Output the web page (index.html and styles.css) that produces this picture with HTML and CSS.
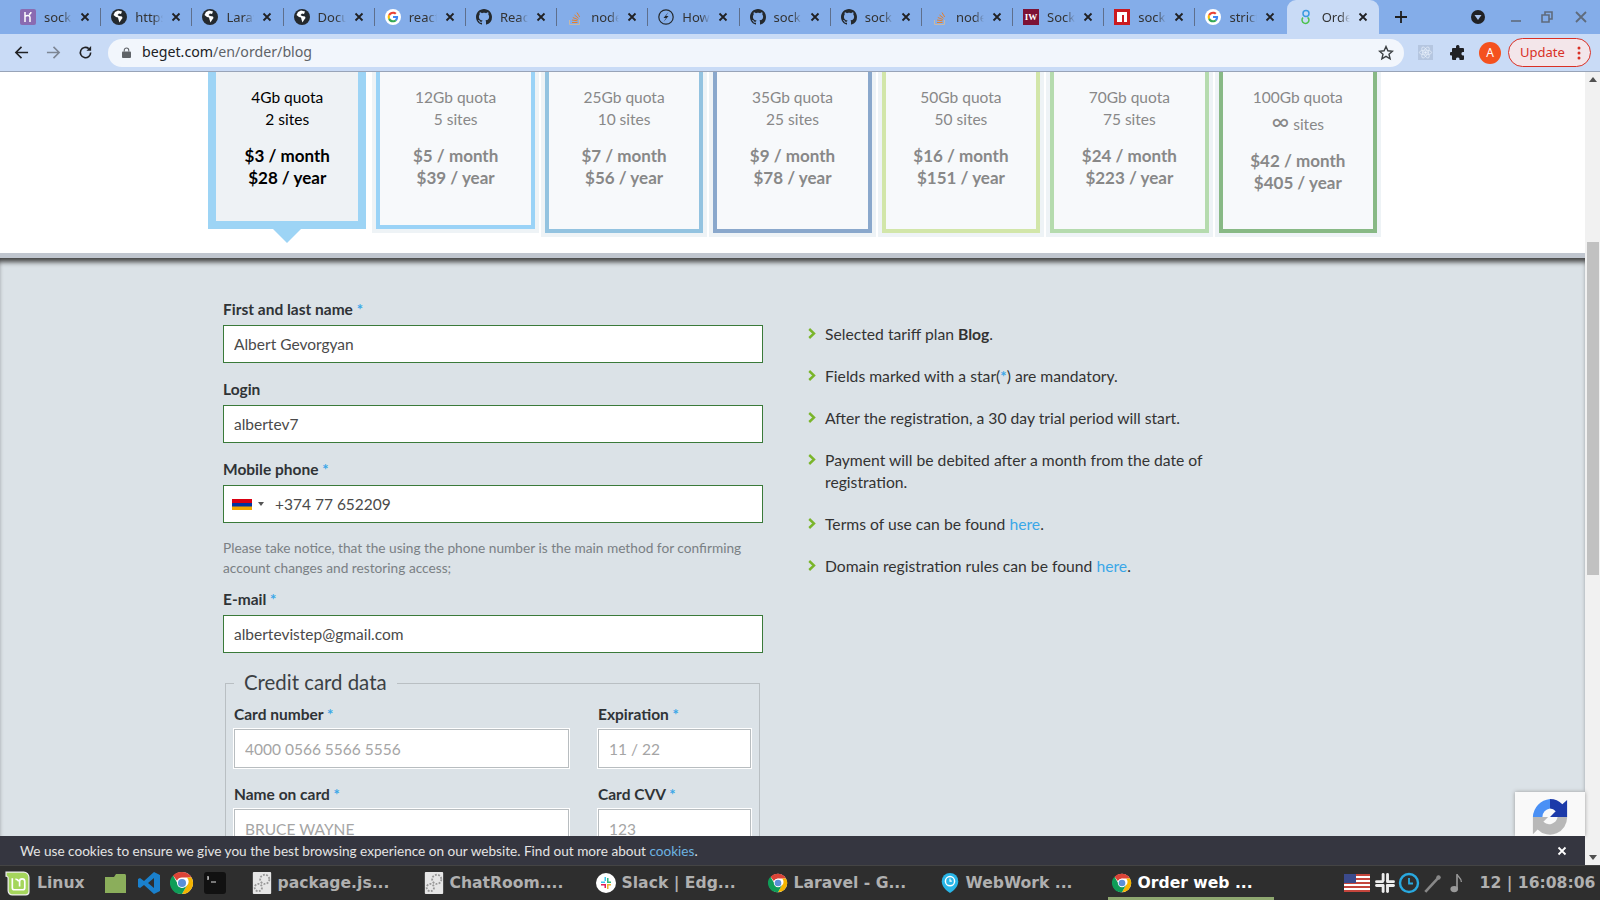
FILE: index.html
```html
<!DOCTYPE html>
<html lang="en">
<head>
  <meta charset="UTF-8">
  <title>Order web hosting</title>
  <link rel="stylesheet" href="styles.css">
</head>
<body>
  <svg class="defs" width="0" height="0">
    <symbol id="globe" viewBox="0 0 16 16"><circle cx="8" cy="8" r="8" fill="#24292e"/><path fill="#fff" d="M7 1.500 4 3 2.500 6l2.500 2 2 .5.500 2 1 3 1.500-2.500 1.500-2-.500-1.500L8 7 6.500 6 8 4.500l2 .5 1-2.500z"/></symbol>
    <symbol id="google" viewBox="0 0 48 48"><circle cx="24" cy="24" r="24" fill="#fff"/><g transform="translate(8 8) scale(.667)"><path fill="#EA4335" d="M24 9.500c3.540 0 6.710 1.220 9.210 3.600l6.850-6.850C35.900 2.380 30.470 0 24 0 14.620 0 6.510 5.380 2.560 13.220l7.980 6.190C12.430 13.720 17.740 9.500 24 9.500z"/><path fill="#4285F4" d="M46.980 24.550c0-1.570-.15-3.090-.38-4.550H24v9.020h12.940c-.58 2.960-2.260 5.480-4.780 7.180l7.730 6c4.510-4.180 7.090-10.360 7.090-17.650z"/><path fill="#FBBC05" d="M10.530 28.590c-.48-1.450-.76-2.990-.76-4.590s.27-3.140.76-4.590l-7.980-6.190C.92 16.460 0 20.120 0 24c0 3.880.92 7.540 2.560 10.780l7.970-6.190z"/><path fill="#34A853" d="M24 48c6.480 0 11.930-2.130 16.090-5.810l-7.730-6c-2.150 1.450-4.920 2.300-8.360 2.300-6.260 0-11.570-4.220-13.470-9.910l-7.980 6.190C6.510 42.620 14.620 48 24 48z"/></g></symbol>
    <symbol id="github" viewBox="0 0 16 16"><path fill="#24292e" d="M8 0C3.580 0 0 3.580 0 8c0 3.540 2.290 6.530 5.470 7.590.4.070.55-.17.55-.38 0-.19-.01-.82-.01-1.490-2.010.37-2.530-.49-2.690-.94-.09-.23-.48-.94-.82-1.130-.28-.15-.68-.52-.01-.53.63-.01 1.080.58 1.230.82.72 1.210 1.870.87 2.330.66.070-.52.28-.87.51-1.070-1.780-.2-3.640-.89-3.640-3.950 0-.87.31-1.590.82-2.150-.08-.2-.36-1.020.08-2.120 0 0 .67-.21 2.200.82.64-.18 1.320-.27 2-.27.68 0 1.360.09 2 .27 1.530-1.040 2.200-.82 2.200-.82.44 1.100.16 1.920.08 2.120.51.56.82 1.270.82 2.150 0 3.070-1.870 3.750-3.650 3.950.29.25.54.73.54 1.480 0 1.070-.01 1.930-.01 2.200 0 .21.15.46.55.38A8.013 8.013 0 0016 8c0-4.420-3.580-8-8-8z"/></symbol>
    <symbol id="stack" viewBox="0 0 16 16"><path d="M2.500 11v4.500h10V11" fill="none" stroke="#c7b9a8" stroke-width="1"/><path d="M5 13.500h5.500M5 11l5.500.8M5.800 8.500l5 2M7.500 6l4 3.200M10 3.500l2.700 4.500" fill="none" stroke="#e8802a" stroke-width="1"/></symbol>
    <symbol id="chrome" viewBox="0 0 24 24"><circle cx="12" cy="12" r="11" fill="#fff"/><path fill="#db4437" d="M12 1a11 11 0 0 1 9.530 5.500H12a5.500 5.500 0 0 0-5 3.200L3 4.500A11 11 0 0 1 12 1z"/><path fill="#f4b400" d="M21.530 6.500A11 11 0 0 1 12 23l4.700-8.200a5.500 5.500 0 0 0 .1-8.300z"/><path fill="#0f9d58" d="M3 4.500l4.700 8.200a5.500 5.500 0 0 0 9 2.100L12 23A11 11 0 0 1 3 4.500z"/><circle cx="12" cy="12" r="5" fill="#fff"/><circle cx="12" cy="12" r="4" fill="#5a8fd8"/></symbol>
    <symbol id="textfile" viewBox="0 0 20 24"><rect width="20" height="24" rx="1" fill="#e6e6e6"/><circle cx="13" cy="8" r="5" fill="none" stroke="#999" stroke-width="2" stroke-dasharray="2 1.500"/><circle cx="6" cy="17" r="4" fill="none" stroke="#999" stroke-width="2" stroke-dasharray="2 1.500"/></symbol>
    <symbol id="chevron" viewBox="0 0 8 11"><path d="M1.200 1 6 5.500 1.200 10" fill="none" stroke="#7ab52a" stroke-width="2.400"/></symbol>
    <symbol id="cross" viewBox="0 0 10 10"><path d="M1.500 1.500l7 7M8.500 1.500l-7 7" stroke="currentColor" stroke-width="1.800" fill="none"/></symbol>
  </svg>

  <div class="tabstrip">
    <div class="tab">
      <svg class="favicon" viewBox="0 0 16 16"><rect width="16" height="16" rx="2" fill="#8a6bb1"/><path d="M5 3v10M5 7.500c2-1.500 5-1.500 5 1V13M11 3c0 1.500-.7 2-2 2.500" fill="none" stroke="#fff" stroke-width="1.500"/></svg>
      <span class="tab-title">socke</span><svg class="tab-close"><use href="#cross"/></svg>
    </div>
    <div class="tab"><svg class="favicon"><use href="#globe"/></svg><span class="tab-title">https</span><svg class="tab-close"><use href="#cross"/></svg></div>
    <div class="tab"><svg class="favicon"><use href="#globe"/></svg><span class="tab-title">Larav</span><svg class="tab-close"><use href="#cross"/></svg></div>
    <div class="tab"><svg class="favicon"><use href="#globe"/></svg><span class="tab-title">Docu</span><svg class="tab-close"><use href="#cross"/></svg></div>
    <div class="tab"><svg class="favicon"><use href="#google"/></svg><span class="tab-title">react</span><svg class="tab-close"><use href="#cross"/></svg></div>
    <div class="tab"><svg class="favicon"><use href="#github"/></svg><span class="tab-title">Reac</span><svg class="tab-close"><use href="#cross"/></svg></div>
    <div class="tab"><svg class="favicon"><use href="#stack"/></svg><span class="tab-title">node</span><svg class="tab-close"><use href="#cross"/></svg></div>
    <div class="tab">
      <svg class="favicon" viewBox="0 0 16 16"><circle cx="8" cy="8" r="7.200" fill="none" stroke="#24292e" stroke-width="1.200"/><path d="M10.500 3 5.500 9H8l-2.500 4 5-6H8z" fill="#24292e"/></svg>
      <span class="tab-title">How</span><svg class="tab-close"><use href="#cross"/></svg>
    </div>
    <div class="tab"><svg class="favicon"><use href="#github"/></svg><span class="tab-title">sock</span><svg class="tab-close"><use href="#cross"/></svg></div>
    <div class="tab"><svg class="favicon"><use href="#github"/></svg><span class="tab-title">sock</span><svg class="tab-close"><use href="#cross"/></svg></div>
    <div class="tab"><svg class="favicon"><use href="#stack"/></svg><span class="tab-title">node</span><svg class="tab-close"><use href="#cross"/></svg></div>
    <div class="tab"><span class="favicon favicon-iw">IW</span><span class="tab-title">Sock</span><svg class="tab-close"><use href="#cross"/></svg></div>
    <div class="tab">
      <svg class="favicon" viewBox="0 0 16 16"><rect width="16" height="16" fill="#cb1a1f"/><path d="M3 3h10v10h-3V6H8v7H3z" fill="#fff"/></svg>
      <span class="tab-title">sock</span><svg class="tab-close"><use href="#cross"/></svg>
    </div>
    <div class="tab"><svg class="favicon"><use href="#google"/></svg><span class="tab-title">strict</span><svg class="tab-close"><use href="#cross"/></svg></div>
    <div class="tab tab-active">
      <svg class="favicon" viewBox="0 0 16 16"><circle cx="8" cy="4.500" r="3" fill="none" stroke="#3b9be0" stroke-width="1.500"/><path d="M5 8.500a3.500 3.500 0 1 0 6 2.500c0-1-.5-2-1.500-2.500" fill="none" stroke="#4cc24c" stroke-width="1.500"/></svg>
      <span class="tab-title">Orde</span><svg class="tab-close"><use href="#cross"/></svg>
    </div>
    <svg class="newtab" viewBox="0 0 14 14"><path d="M7 1v12M1 7h12" stroke="#1f1f1f" stroke-width="1.800" fill="none"/></svg>
    <div class="window-btns">
      <svg class="media-btn" viewBox="0 0 14 14"><circle cx="7" cy="7" r="7" fill="#202124"/><path d="M3.500 5h7L7 10z" fill="#a9c4ee"/></svg>
      <svg class="win-btn" viewBox="0 0 14 14"><path d="M2 11h10" stroke="#5f6b7c" stroke-width="1.600"/></svg>
      <svg class="win-btn" viewBox="0 0 14 14"><path d="M2 5h7v7H2zM5 5V2h7v7H9" fill="none" stroke="#5f6b7c" stroke-width="1.600"/></svg>
      <svg class="win-btn" viewBox="0 0 14 14"><path d="M2 2l10 10M12 2 2 12" stroke="#5f6b7c" stroke-width="1.800"/></svg>
    </div>
  </div>

  <div class="toolbar">
    <svg class="nav-btn" viewBox="0 0 16 16"><path d="M15 8H2M8 2 2 8l6 6" fill="none" stroke="#202124" stroke-width="1.700"/></svg>
    <svg class="nav-btn" viewBox="0 0 16 16"><path d="M1 8h13M8 2l6 6-6 6" fill="none" stroke="#7d8694" stroke-width="1.700"/></svg>
    <svg class="nav-btn" viewBox="0 0 16 16"><path d="M13.500 8A5.500 5.500 0 1 1 11.500 3.800" fill="none" stroke="#202124" stroke-width="1.700"/><path d="M14 1v5H9z" fill="#202124"/></svg>
    <div class="omnibox">
      <svg class="lock" viewBox="0 0 10 12"><path d="M2.500 5V3.500a2.500 2.500 0 0 1 5 0V5" fill="none" stroke="#5f6368" stroke-width="1.200"/><rect y="5" width="10" height="7" rx="1" fill="#5f6368"/></svg>
      <span class="url">beget.com<span class="url-path">/en/order/blog</span></span>
      <svg class="star" viewBox="0 0 16 16"><path d="M8 1.500l1.900 4.300 4.600.4-3.500 3 1.100 4.600L8 11.400l-4.100 2.400L5 9.200l-3.500-3 4.600-.4z" fill="none" stroke="#3c4043" stroke-width="1.400"/></svg>
    </div>
    <svg class="ext-react" viewBox="0 0 22 22"><rect width="22" height="22" fill="#b5c6e0"/><g fill="none" stroke="#e8f0fb" stroke-width="1"><ellipse cx="11" cy="11" rx="9" ry="3.500"/><ellipse cx="11" cy="11" rx="9" ry="3.500" transform="rotate(60 11 11)"/><ellipse cx="11" cy="11" rx="9" ry="3.500" transform="rotate(120 11 11)"/></g><circle cx="11" cy="11" r="1.800" fill="#e8f0fb"/></svg>
    <svg class="ext-puzzle" viewBox="0 0 16 16"><path fill="#202124" d="M6 1.500a1.800 1.800 0 0 1 3.500 0V3H13a1 1 0 0 1 1 1v3h-1.200a1.800 1.800 0 0 0 0 3.500H14V14a1 1 0 0 1-1 1H9.500v-1.200a1.800 1.800 0 0 0-3.500 0V15H3a1 1 0 0 1-1-1v-3.500H1a1.800 1.800 0 0 1 0-3.500h1V4a1 1 0 0 1 1-1h3z"/></svg>
    <span class="avatar">A</span>
    <div class="update-btn">
      <span>Update</span>
      <svg class="update-dots" viewBox="0 0 4 14"><circle cx="2" cy="2" r="1.500"/><circle cx="2" cy="7" r="1.500"/><circle cx="2" cy="12" r="1.500"/></svg>
    </div>
  </div>

  <div class="viewport">
    <div class="page">
      <section class="plans-band">
        <div class="plans">
          <div class="plan plan-selected">
            <p>4Gb quota<br>2 sites</p>
            <p class="price">$3 / month<br>$28 / year</p>
          </div>
          <div class="plan plan-2">
            <p>12Gb quota<br>5 sites</p>
            <p class="price">$5 / month<br>$39 / year</p>
          </div>
          <div class="plan plan-3">
            <p>25Gb quota<br>10 sites</p>
            <p class="price">$7 / month<br>$56 / year</p>
          </div>
          <div class="plan plan-4">
            <p>35Gb quota<br>25 sites</p>
            <p class="price">$9 / month<br>$78 / year</p>
          </div>
          <div class="plan plan-5">
            <p>50Gb quota<br>50 sites</p>
            <p class="price">$16 / month<br>$151 / year</p>
          </div>
          <div class="plan plan-6">
            <p>70Gb quota<br>75 sites</p>
            <p class="price">$24 / month<br>$223 / year</p>
          </div>
          <div class="plan plan-7">
            <p>100Gb quota<br><span class="inf">∞</span> sites</p>
            <p class="price">$42 / month<br>$405 / year</p>
          </div>
        </div>
      </section>

      <section class="order">
        <form class="order-form">
          <label class="field-label">First and last name <span class="req">*</span></label>
          <input class="field" type="text" value="Albert Gevorgyan">
          <label class="field-label">Login</label>
          <input class="field" type="text" value="albertev7">
          <label class="field-label">Mobile phone <span class="req">*</span></label>
          <div class="field phone-field">
            <svg class="flag" viewBox="0 0 20 11"><rect width="20" height="4" fill="#d90012"/><rect y="4" width="20" height="4" fill="#0033a0"/><rect y="7.500" width="20" height="3.500" fill="#f2a800"/></svg>
            <span class="flag-caret"></span>
            <span class="phone-number">+374 77 652209</span>
          </div>
          <p class="hint">Please take notice, that the using the phone number is the main method for confirming account changes and restoring access;</p>
          <label class="field-label">E-mail <span class="req">*</span></label>
          <input class="field field-last" type="text" value="albertevistep@gmail.com">

          <fieldset class="card-data">
            <legend>Credit card data</legend>
            <div class="card-grid">
              <div>
                <label class="field-label">Card number <span class="req">*</span></label>
                <input class="card-input" type="text" placeholder="4000 0566 5566 5556">
              </div>
              <div>
                <label class="field-label">Expiration <span class="req">*</span></label>
                <input class="card-input" type="text" placeholder="11 / 22">
              </div>
              <div>
                <label class="field-label">Name on card <span class="req">*</span></label>
                <input class="card-input" type="text" placeholder="BRUCE WAYNE">
              </div>
              <div>
                <label class="field-label">Card CVV <span class="req">*</span></label>
                <input class="card-input" type="text" placeholder="123">
              </div>
            </div>
          </fieldset>
        </form>

        <ul class="info">
          <li><svg class="chevron"><use href="#chevron"/></svg><span>Selected tariff plan <b>Blog</b>.</span></li>
          <li><svg class="chevron"><use href="#chevron"/></svg><span>Fields marked with a star(<span class="req">*</span>) are mandatory.</span></li>
          <li><svg class="chevron"><use href="#chevron"/></svg><span>After the registration, a 30 day trial period will start.</span></li>
          <li><svg class="chevron"><use href="#chevron"/></svg><span>Payment will be debited after a month from the date of registration.</span></li>
          <li><svg class="chevron"><use href="#chevron"/></svg><span>Terms of use can be found <a href="#">here</a>.</span></li>
          <li><svg class="chevron"><use href="#chevron"/></svg><span>Domain registration rules can be found <a href="#">here</a>.</span></li>
        </ul>
      </section>
    </div>

    <div class="scrollbar">
      <span class="scroll-up"></span>
      <div class="scroll-track"><div class="scroll-thumb"></div></div>
      <span class="scroll-down"></span>
    </div>

    <div class="recaptcha">
      <svg viewBox="0 0 40 44" width="38" height="42">
        <path d="M20 2a18 18 0 0 1 13 5.500L38 3v18H20l6-6a9 9 0 0 0-6-3z" fill="#1c3aa9"/>
        <path d="M20 2A20 20 0 0 0 2 21h10a9 9 0 0 1 8-9z" fill="#4a90f5"/>
        <path d="M2 21v18l5-5a18 18 0 0 0 31-13H28a9 9 0 0 1-15 5l5-5z" fill="#b8b8b8"/>
      </svg>
    </div>

    <div class="cookie-bar">
      <span>We use cookies to ensure we give you the best browsing experience on our website. Find out more about <a href="#">cookies</a>.</span>
      <svg class="cookie-close"><use href="#cross"/></svg>
    </div>
  </div>

  <div class="taskbar">
    <div class="start">
      <svg class="start-logo" viewBox="0 0 26 26"><path d="M2 2h17a5 5 0 0 1 5 5v14a3 3 0 0 1-3 3H8a4 4 0 0 1-4-4V8a2 2 0 0 0-2-2z" fill="#a5d65c" stroke="#eee" stroke-width="1.200"/><path d="M8 8v9a2 2 0 0 0 2 2h8a2 2 0 0 0 2-2v-6a2.500 2.500 0 0 0-5 0v5M14 11a2.500 2.500 0 0 0-3-2" fill="none" stroke="#fff" stroke-width="1.600"/></svg>
      <span>Linux</span>
    </div>
    <div class="launchers">
      <svg class="launcher" viewBox="0 0 24 24"><path d="M1 6h9l2-3h9a2 2 0 0 1 1 2v17H1z" fill="#8bae5b"/></svg>
      <svg class="launcher" viewBox="0 0 24 24"><path d="M17 1l6 3v16l-6 3L7 14l-4 3-2-1V8l2-1 4 3zM17 7l-6 5 6 5z" fill="#1a80cc"/></svg>
      <svg class="launcher"><use href="#chrome"/></svg>
      <svg class="launcher" viewBox="0 0 24 24"><rect x="1" y="1" width="22" height="22" rx="3" fill="#111"/><path d="M5 7h1M5 5v4M8 11h5" stroke="#ddd" stroke-width="1.200"/></svg>
    </div>
    <div class="windows">
      <div class="window"><svg class="window-icon"><use href="#textfile"/></svg><span>package.js...</span></div>
      <div class="window"><svg class="window-icon"><use href="#textfile"/></svg><span>ChatRoom....</span></div>
      <div class="window">
        <svg class="window-icon" viewBox="0 0 20 20"><circle cx="10" cy="10" r="10" fill="#fff"/><rect x="5" y="8.500" width="4" height="1.500" fill="#36c5f0"/><rect x="8.500" y="4" width="1.500" height="4" fill="#36c5f0"/><rect x="11" y="5" width="1.500" height="4" fill="#2eb67d"/><rect x="11" y="8.500" width="4" height="1.500" fill="#2eb67d"/><rect x="11" y="11" width="4" height="1.500" fill="#ecb22e"/><rect x="11" y="12" width="1.500" height="4" fill="#ecb22e"/><rect x="8.500" y="11" width="1.500" height="4" fill="#e01e5a"/><rect x="5" y="11" width="4" height="1.500" fill="#e01e5a"/></svg>
        <span>Slack | Edg...</span>
      </div>
      <div class="window"><svg class="window-icon"><use href="#chrome"/></svg><span>Laravel - G...</span></div>
      <div class="window">
        <svg class="window-icon" viewBox="0 0 20 24"><path d="M10 1a9 9 0 0 1 9 9c0 6-5 10-9 13C6 20 1 16 1 10a9 9 0 0 1 9-9z" fill="#29b6e8"/><circle cx="10" cy="10" r="5" fill="none" stroke="#fff" stroke-width="1.600"/><path d="M10 7v3h2" fill="none" stroke="#fff" stroke-width="1.200"/></svg>
        <span>WebWork ...</span>
      </div>
      <div class="window window-active"><svg class="window-icon"><use href="#chrome"/></svg><span>Order web ...</span></div>
    </div>
    <div class="tray">
      <svg class="tray-flag" viewBox="0 0 26 18"><rect width="26" height="18" fill="#fff"/><path d="M0 1h26M0 5h26M0 9h26M0 13h26M0 17h26" stroke="#c4453c" stroke-width="1.800"/><rect width="12" height="9" fill="#3b4a8c"/></svg>
      <svg class="tray-icon" viewBox="0 0 20 20"><g fill="#eee"><rect x="1" y="7.500" width="8" height="2.600" rx="1.300"/><rect x="7" y="1" width="2.600" height="8" rx="1.300"/><rect x="11" y="1" width="2.600" height="8" rx="1.300"/><rect x="11" y="7.500" width="8" height="2.600" rx="1.300"/><rect x="11" y="11" width="8" height="2.600" rx="1.300"/><rect x="11" y="11" width="2.600" height="8" rx="1.300"/><rect x="7" y="11" width="2.600" height="8" rx="1.300"/><rect x="1" y="11" width="8" height="2.600" rx="1.300"/></g></svg>
      <svg class="tray-icon" viewBox="0 0 22 22"><circle cx="11" cy="11" r="9" fill="none" stroke="#29a9e0" stroke-width="2.400"/><path d="M11 6v5.500h4" fill="none" stroke="#29a9e0" stroke-width="1.800"/></svg>
      <svg class="tray-icon" viewBox="0 0 20 20"><path d="M3 18 16 4" stroke="#888" stroke-width="2.400"/><circle cx="15" cy="5" r="2" fill="#888"/></svg>
      <svg class="tray-icon" viewBox="0 0 20 20"><path d="M10 2v13" stroke="#999" stroke-width="1.500"/><ellipse cx="7.500" cy="15.500" rx="3.500" ry="2.800" fill="#999"/><path d="M10 2c1 3 4 3 4 7" fill="none" stroke="#999" stroke-width="1.200"/></svg>
      <span class="clock">12 | 16:08:06</span>
    </div>
  </div>
</body>
</html>
```

FILE: styles.css
```css
* {
  box-sizing: border-box;
}
html, body {
  height: 100%;
}
body {
  margin: 0;
  display: flex;
  flex-direction: column;
  overflow: hidden;
  font-family: Lato, sans-serif;
  color: #333;
}
.defs {
  position: absolute;
}

/* browser tabs */
.tabstrip {
  height: 34px;
  flex: none;
  display: flex;
  align-items: center;
  padding-left: 10px;
  background: #84ade9;
  font-family: "Noto Sans", sans-serif;
  font-size: 13px;
  color: #333;
}
.tab {
  width: 91.2px;
  height: 34px;
  flex: none;
  display: flex;
  align-items: center;
  padding-left: 10px;
  position: relative;
}
.tab::after {
  content: "";
  position: absolute;
  right: 0;
  top: 8px;
  height: 18px;
  border-right: 1px solid #5e6f8c;
}
.tab:nth-last-child(-n+4)::after, .tab-active::after {
  border: 0;
}
.tab-active {
  width: 92px;
  background: #c9dbf6;
  border-radius: 9px 9px 0 0;
  padding-left: 11px;
}
.favicon {
  width: 16px;
  height: 16px;
  flex: none;
}
.favicon-iw {
  background: #7d1235;
  color: #fff;
  font-family: "Liberation Serif", serif;
  font-size: 9px;
  font-weight: bold;
  line-height: 16px;
  text-align: center;
}
.tab-title {
  width: 28px;
  margin-left: 8px;
  overflow: hidden;
  white-space: nowrap;
  -webkit-mask-image: linear-gradient(to right, #000 65%, transparent);
  mask-image: linear-gradient(to right, #000 65%, transparent);
}
.tab-close {
  width: 10px;
  height: 10px;
  margin-left: 8px;
  color: #202124;
}
.newtab {
  width: 14px;
  height: 14px;
  flex: none;
  margin-left: 15px;
}
.window-btns {
  display: flex;
  flex: none;
  align-items: center;
  margin-left: 63px;
}
.media-btn {
  width: 14px;
  height: 14px;
  margin-right: 24px;
}
.win-btn {
  width: 14px;
  height: 14px;
  margin-right: 17px;
}
.win-btn:last-child {
  margin: 0 0 0 3px;
}

/* address bar */
.toolbar {
  height: 38px;
  flex: none;
  display: flex;
  align-items: center;
  padding-left: 14px;
  background: #c9dbf6;
  border-bottom: 1px solid #98a4b8;
}
.nav-btn {
  width: 15px;
  height: 15px;
  margin-right: 17px;
}
.omnibox {
  width: 1296px;
  height: 28px;
  margin-left: -2px;
  display: flex;
  align-items: center;
  padding: 0 10px 0 14px;
  background: #f2f6fc;
  border-radius: 14px;
  font-family: "Noto Sans", sans-serif;
  font-size: 14.2px;
  color: #202124;
}
.lock {
  width: 9px;
  height: 11px;
}
.url {
  margin-left: 11px;
  padding-bottom: 3px;
  flex: 1;
}
.url-path {
  color: #5f6368;
}
.star {
  width: 16px;
  height: 16px;
}
.ext-react {
  width: 15px;
  height: 15px;
  margin-left: 14px;
}
.ext-puzzle {
  width: 16px;
  height: 16px;
  margin-left: 17px;
}
.avatar {
  width: 22px;
  height: 22px;
  margin-left: 13px;
  border-radius: 50%;
  background: #f4511e;
  color: #fff;
  font-family: "Noto Sans", sans-serif;
  font-size: 12px;
  line-height: 22px;
  text-align: center;
}
.update-btn {
  width: 83px;
  height: 29px;
  margin-left: 7px;
  display: flex;
  align-items: center;
  padding: 0 0 2px 11px;
  border: 1px solid #d93025;
  border-radius: 15px;
  background: #f3e6ea;
  color: #d93025;
  font-family: "Noto Sans", sans-serif;
  font-size: 13px;
}
.update-dots {
  width: 4px;
  height: 14px;
  margin: 2px 0 0 12px;
  fill: #d93025;
}

/* page area */
.viewport {
  flex: 1;
  min-height: 0;
  display: flex;
  position: relative;
}
.page {
  flex: 1;
  overflow: hidden;
  background: #dbe2e7;
}
.plans-band {
  background: #fff;
  padding: 0 0 20px 208px;
}
.plans {
  width: 1169px;
  margin-top: -10px;
  display: grid;
  grid-template-columns: repeat(7, 1fr);
  gap: 10px;
  align-items: start;
  text-align: center;
  font-size: 15.5px;
  line-height: 22px;
}
.plan {
  height: 171px;
  padding-top: 20px;
  border: 4px solid #93c3e0;
  background: #f7f9fb;
  box-shadow: 0 0 0 4px #eef3f6;
  color: #888;
}
.plan p {
  margin: 0;
}
.plan .price {
  margin-top: 15px;
  font-size: 17px;
  font-weight: bold;
}
.inf {
  font-size: 24px;
  line-height: 26px;
}
.plan-selected {
  height: 167px;
  padding-top: 16px;
  border: 8px solid #9dd4f5;
  background: #eef2f5;
  box-shadow: none;
  color: #000;
  position: relative;
}
.plan-selected::after {
  content: "";
  position: absolute;
  left: 50%;
  bottom: -22px;
  margin-left: -14px;
  border-style: solid;
  border-width: 14px 14px 0;
  border-color: #9dd4f5 transparent transparent;
}
.plan-2 {
  height: 167px;
  border-color: #9ad3f7;
}
.plan-3 {
  border-color: #93c3e0;
}
.plan-4 {
  border-color: #8aa8cc;
}
.plan-5 {
  border-color: #d2e6a9;
}
.plan-6 {
  border-color: #b5dbae;
}
.plan-7 {
  border-color: #88b985;
}

/* order form */
.order {
  display: flex;
  padding: 42px 0 0 223px;
  border-top: 5px solid #c0c6cf;
  box-shadow: inset 0 6px 5px -2px #444;
}
.order-form {
  width: 540px;
  flex: none;
}
.field-label {
  display: block;
  height: 18px;
  margin-bottom: 7px;
  font-size: 15.5px;
  font-weight: bold;
  line-height: 18px;
  color: #2f3336;
}
.req {
  color: #3aa7e8;
  font-size: 15px;
  font-weight: bold;
  line-height: 0;
}
.field {
  display: block;
  width: 100%;
  height: 38px;
  margin-bottom: 17px;
  padding: 0 10px;
  border: 1px solid #3a7a3a;
  border-radius: 0;
  background: #fff;
  font-family: Lato, sans-serif;
  font-size: 15.5px;
  color: #4a4a4a;
}
.phone-field {
  display: flex;
  align-items: center;
  margin-bottom: 15px;
  padding: 0 8px;
}
.flag {
  width: 20px;
  height: 11px;
}
.flag-caret {
  margin-left: 6px;
  border-style: solid;
  border-width: 4px 3px 0;
  border-color: #555 transparent transparent;
}
.phone-number {
  margin-left: 11px;
}
.hint {
  margin: 0 0 12px;
  font-size: 13.7px;
  line-height: 20px;
  color: #7a8084;
}
.field-last {
  margin-bottom: 16px;
}
.card-data {
  width: 534px;
  margin: 0 0 0 2px;
  padding: 8px 8px 0 8px;
  border: 1px solid #b9bfc3;
}
.card-data legend {
  margin-left: 0;
  padding: 0 10px 2px;
  font-size: 20.4px;
  line-height: 26px;
  color: #3c4144;
}
.card-grid {
  display: grid;
  grid-template-columns: 335px 153px;
  gap: 17px 29px;
}
.card-grid .field-label {
  margin-bottom: 6px;
}
.card-input {
  display: block;
  width: 100%;
  height: 39px;
  padding: 0 10px;
  border: 1px solid #b8bdc0;
  outline: 1px solid #fff;
  outline-offset: 0;
  border-radius: 0;
  background: #fff;
  font-family: Lato, sans-serif;
  font-size: 15.5px;
}
.card-input::placeholder {
  color: #a5a5a5;
}

/* notes beside the form */
.info {
  width: 415px;
  margin: 23px 0 0 45px;
  padding: 0;
  list-style: none;
  font-size: 15.7px;
  line-height: 22px;
  color: #333;
}
.info li {
  display: flex;
  margin-bottom: 20px;
}
.chevron {
  width: 8px;
  height: 11px;
  flex: none;
  margin: 5px 9px 0 0;
}
.info a {
  color: #3aa7e8;
  text-decoration: none;
}

/* scrollbar */
.scrollbar {
  width: 15px;
  flex: none;
  display: flex;
  flex-direction: column;
  align-items: center;
  background: #f1f1f1;
}
.scroll-up, .scroll-down {
  height: 15px;
  flex: none;
  margin-top: 5px;
  border-style: solid;
  border-color: transparent;
  border-width: 0 4px 5px;
  border-bottom-color: #505050;
}
.scroll-up {
  height: 0;
}
.scroll-down {
  height: 0;
  margin: 0 0 5px;
  border-width: 5px 4px 0;
  border-top-color: #505050;
}
.scroll-track {
  flex: 1;
  width: 100%;
  padding-top: 160px;
}
.scroll-thumb {
  width: 12px;
  height: 333px;
  margin: 0 auto;
  background: #c1c1c1;
}

/* things over the page */
.recaptcha {
  position: absolute;
  right: 15px;
  bottom: 29px;
  width: 70px;
  height: 44px;
  padding: 5px 0 0 16px;
  overflow: hidden;
  background: #f9f9f9;
  box-shadow: 0 0 4px #999;
}
.cookie-bar {
  position: absolute;
  left: 0;
  right: 15px;
  bottom: 0;
  height: 29px;
  display: flex;
  align-items: center;
  justify-content: space-between;
  padding: 0 18px 0 20px;
  background: #353640;
  color: #e4e4e4;
  font-size: 13.6px;
}
.cookie-bar a {
  color: #6db3e0;
  text-decoration: none;
}
.cookie-close {
  width: 10px;
  height: 10px;
  color: #fff;
}

/* desktop panel */
.taskbar {
  height: 35px;
  flex: none;
  display: flex;
  align-items: center;
  background: #2e2e2e;
  border-top: 1px solid #444;
  font-family: "DejaVu Sans", sans-serif;
  font-size: 15.6px;
  font-weight: bold;
  color: #b0b0b0;
}
.start {
  display: flex;
  align-items: center;
  padding-left: 4px;
}
.start-logo {
  width: 27px;
  height: 27px;
  margin-right: 6px;
}
.launchers {
  display: flex;
  gap: 9px;
  margin-left: 19px;
}
.launcher {
  width: 24px;
  height: 24px;
}
.windows {
  display: flex;
  margin-left: 21px;
}
.window {
  width: 172px;
  height: 34px;
  display: flex;
  align-items: center;
  padding-left: 4px;
  white-space: nowrap;
}
.window-icon {
  width: 20px;
  height: 22px;
  margin-right: 6px;
  flex: none;
}
.window-active {
  width: 166px;
  padding-left: 4px;
  color: #fff;
  border-bottom: 3px solid #8fa870;
  padding-top: 3px;
}
.tray {
  display: flex;
  align-items: center;
  margin-left: 70px;
}
.tray-flag {
  width: 26px;
  height: 18px;
  margin-right: 4px;
}
.tray-icon {
  width: 22px;
  height: 22px;
  margin-right: 2px;
}
.clock {
  margin-left: 10px;
}
```
